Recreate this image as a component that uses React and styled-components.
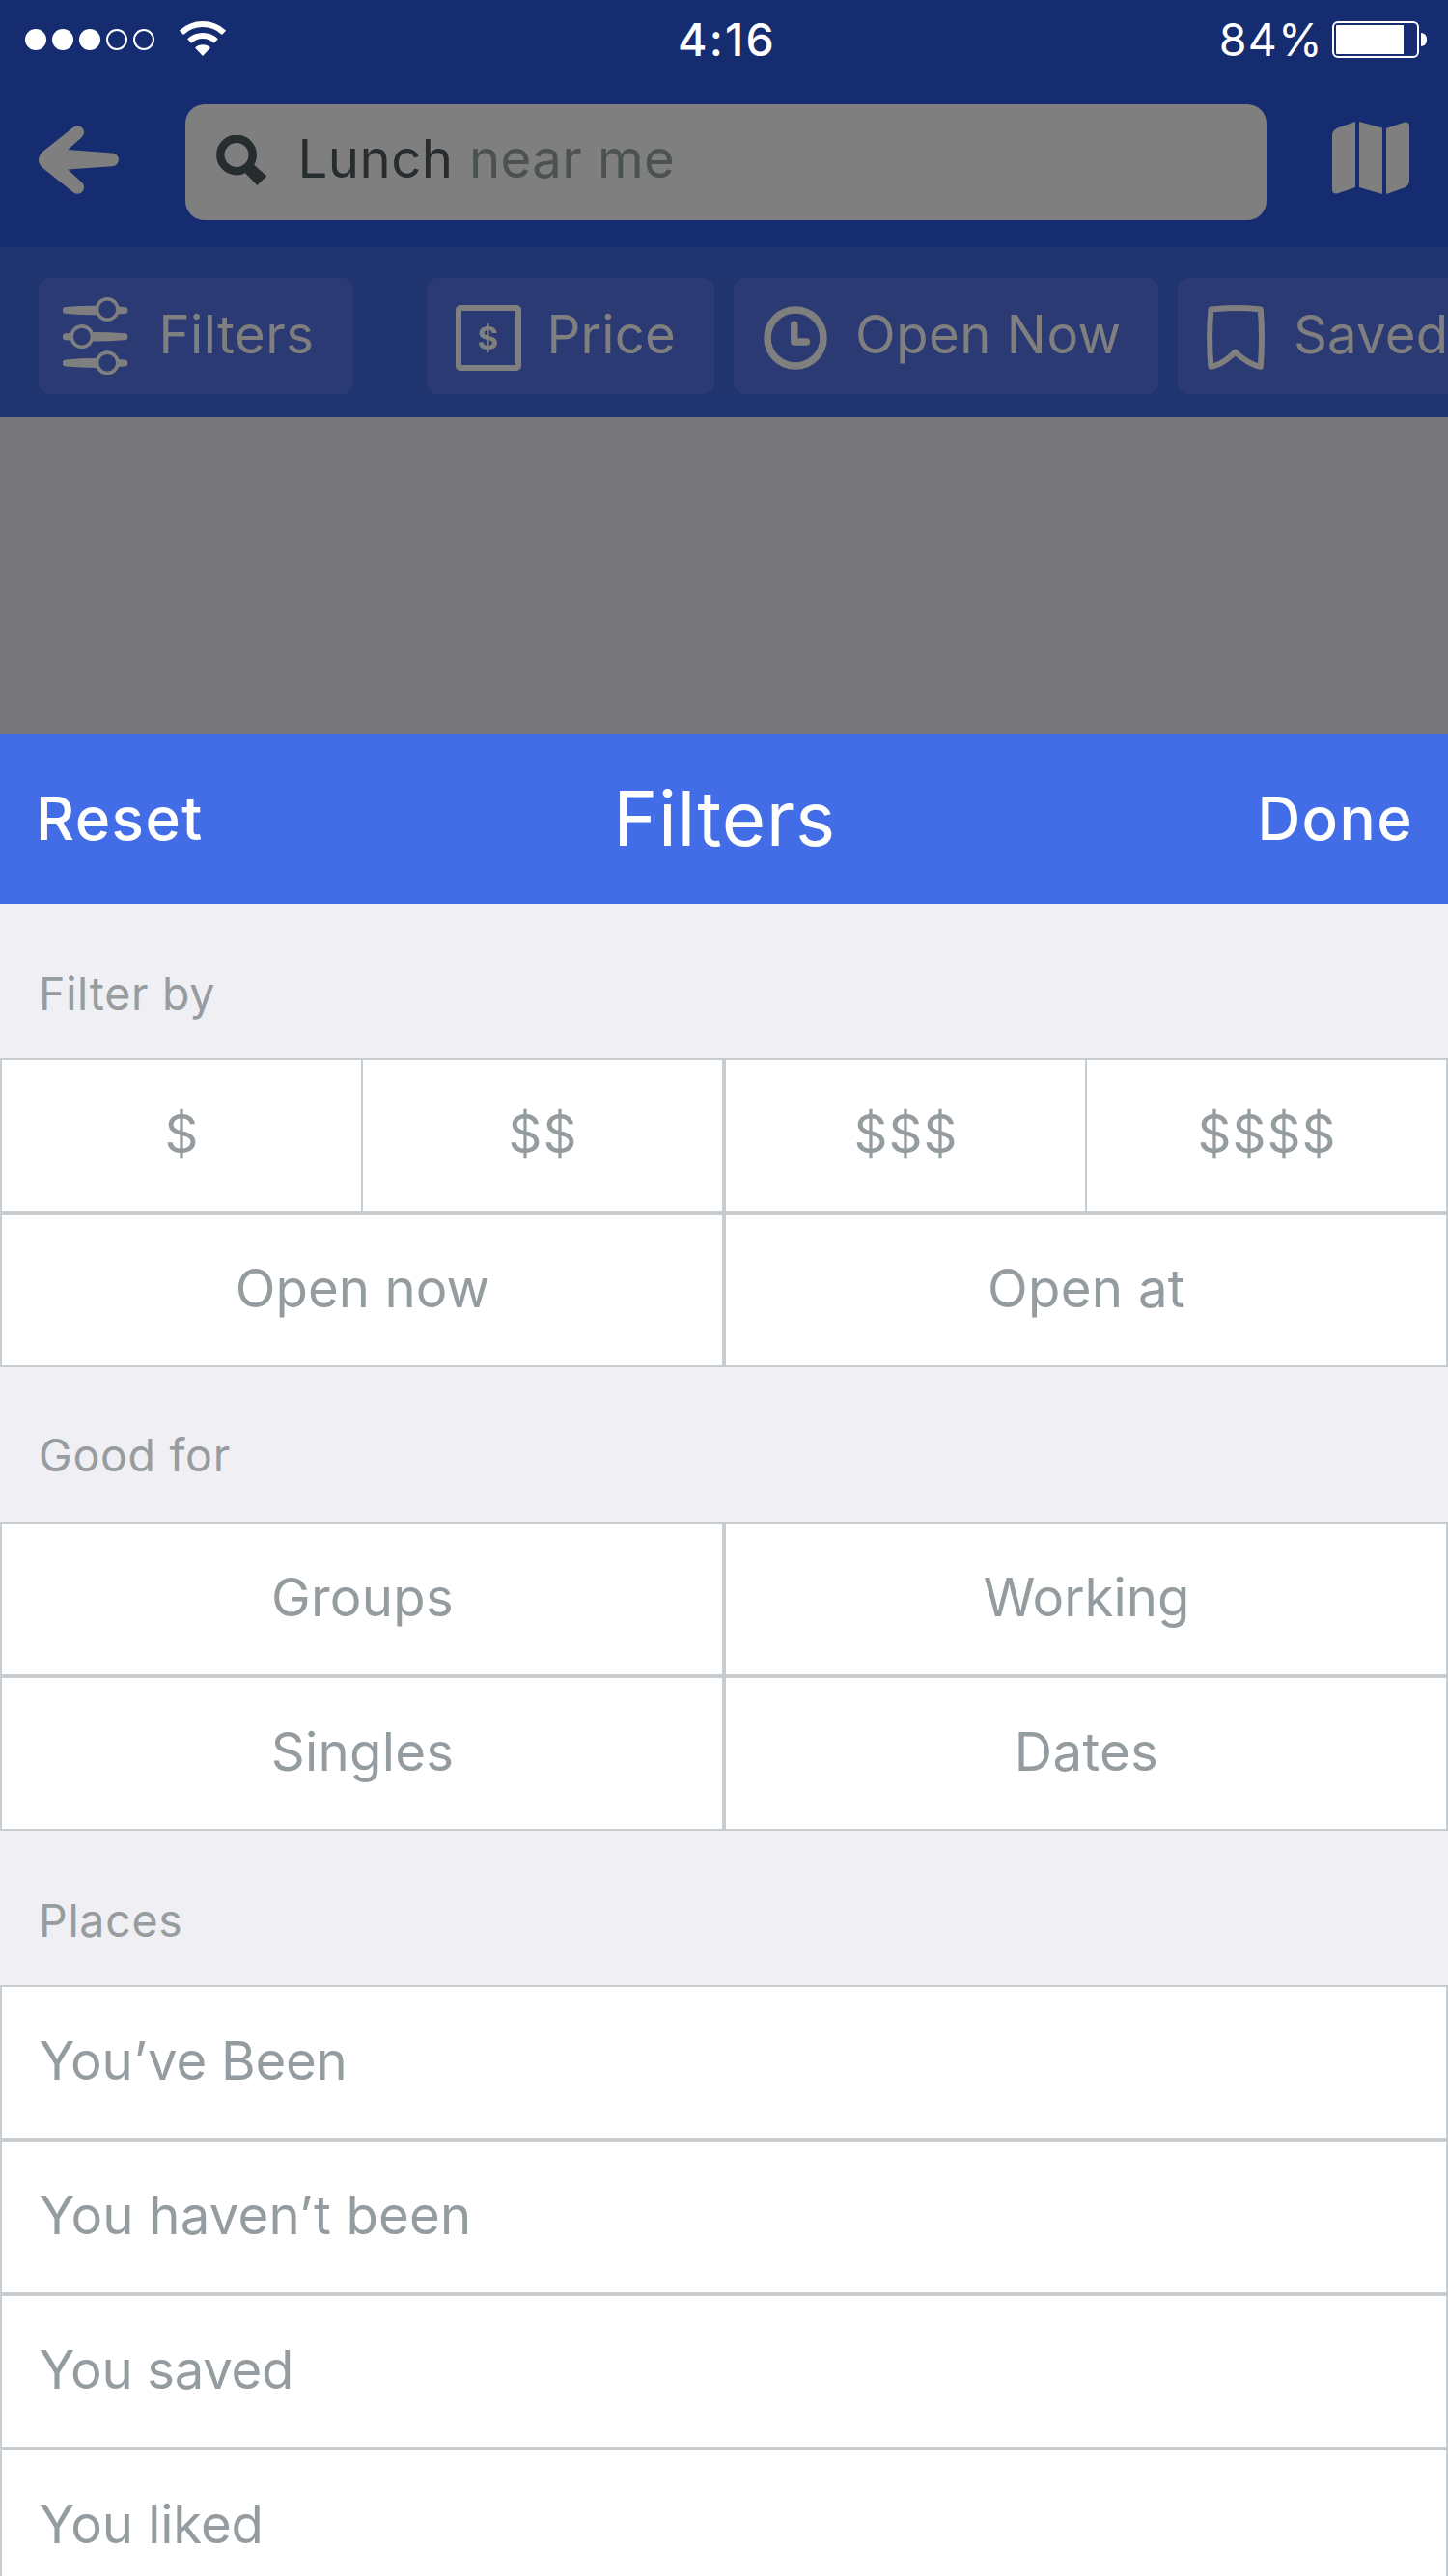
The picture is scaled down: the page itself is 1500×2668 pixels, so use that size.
import React from "react";
import styled, { createGlobalStyle } from "styled-components";

const ink = {
  navy: "#162c70",
  strip: "#203470",
  chip: "#2b3a73",
  dimmed: "#7f7f7f",
  accent: "#426de6",
  canvas: "#efeff4",
  line: "#c6cccf",
  text: "#959ca0",
};

const GlobalStyle = createGlobalStyle`
  *, *::before, *::after { box-sizing: border-box; }
  body {
    margin: 0;
    font-family: Inter, "Liberation Sans", sans-serif;
  }
`;

const Screen = styled.main`
  display: flex;
  flex-direction: column;
  width: 1500px;
  height: 2668px;
  overflow: hidden;
  background: #777779;
`;

const Txt = styled.span`
  white-space: pre;
  letter-spacing: ${(p) => p.$track || 0}px;
`;

/* Status bar */

const StatusBar = styled.div`
  display: flex;
  align-items: flex-start;
  flex: none;
  height: 96px;
  padding: 13px 22px 0 26px;
  background: ${ink.navy};
  color: #fff;
  font-size: 46.5px;
  line-height: 56px;
`;

const Carrier = styled.div`
  display: flex;
  align-items: center;
  gap: 26px;
  width: 676px;
  height: 56px;
`;

const SignalDots = styled.div`
  display: flex;
  gap: 6px;
`;

const Dot = styled.i`
  width: 22px;
  height: 22px;
  border: 2px solid #fff;
  border-radius: 50%;
  background: ${(p) => (p.$on ? "#fff" : "transparent")};
`;

const WifiIcon = styled.svg`
  margin-bottom: 2px;
`;

const Clock = styled(Txt)`
  font-weight: 500;
`;

const Power = styled.div`
  display: flex;
  align-items: center;
  gap: 9px;
  margin-left: auto;
`;

const Battery = styled.div`
  display: flex;
  align-items: center;
  gap: 2px;
`;

const BatteryShell = styled.div`
  width: 90px;
  height: 38px;
  padding: 2px;
  border: 2px solid #fff;
  border-radius: 6px;
`;

const BatteryLevel = styled.div`
  width: 70px;
  height: 30px;
  border-radius: 1px 0 0 1px;
  background: #fff;
`;

const BatteryTip = styled.div`
  width: 6px;
  height: 14px;
  border-radius: 0 7px 7px 0 / 0 7px 7px 0;
  background: #fff;
`;

/* Search header */

const NavBar = styled.header`
  display: flex;
  align-items: flex-start;
  flex: none;
  height: 160px;
  padding: 12px 40px 0;
  background: ${ink.navy};
`;

const IconButton = styled.button`
  display: flex;
  align-items: center;
  height: 120px;
  padding: 0;
  border: 0;
  background: none;
  color: ${ink.dimmed};
`;

const BackButton = styled(IconButton)`
  width: 152px;
  padding-bottom: 5px;
`;

const MapButton = styled(IconButton)`
  margin-left: auto;
  padding-bottom: 9px;
`;

const SearchField = styled.div`
  display: flex;
  align-items: flex-start;
  width: 1120px;
  height: 120px;
  padding: 23px 0 0 32px;
  border-radius: 20px;
  background: ${ink.dimmed};
  color: #272d2e;
  font-size: 54.5px;
  line-height: 66px;
`;

const SearchIcon = styled.svg`
  margin: 9px 31.5px 0 0;
`;

const Where = styled(Txt)`
  margin-left: 16.5px;
  color: #4c5151;
`;

/* Quick filters */

const ChipStrip = styled.nav`
  display: flex;
  gap: 20px;
  flex: none;
  height: 176px;
  padding: 32px 0 0 40px;
  overflow: hidden;
  background: ${ink.strip};
`;

const Chip = styled.button`
  display: flex;
  align-items: center;
  flex: none;
  width: ${(p) => p.$width}px;
  height: 120px;
  margin: 0 ${(p) => p.$after || 0}px 0 0;
  padding: 0 0 0 ${(p) => p.$inset}px;
  border: 0;
  border-radius: 12px;
  background: ${ink.chip};
  color: ${ink.dimmed};
  font: 400 54.5px/66px Inter, "Liberation Sans", sans-serif;
`;

const ChipLabel = styled(Txt)`
  margin: 0 0 4px ${(p) => p.$gap}px;
`;

/* Sheet */

const Sheet = styled.section`
  display: flex;
  flex-direction: column;
  flex: none;
  margin-top: 328px;
  background: ${ink.canvas};
`;

const SheetHeader = styled.div`
  display: grid;
  grid-template-columns: 1fr auto 1fr;
  align-items: start;
  height: 176px;
  padding: 40px 36px 0 37px;
  background: ${ink.accent};
  color: #fff;
`;

const SheetTitle = styled.h1`
  margin: 0;
  font-size: 78px;
  font-weight: 400;
  line-height: 95px;
  letter-spacing: 0.69px;
`;

const Action = styled.button`
  justify-self: ${(p) => p.$side};
  margin: 10px 0 0;
  padding: 0;
  border: 0;
  background: none;
  color: #fff;
  font: 500 62px/75px Inter, "Liberation Sans", sans-serif;
  letter-spacing: 1.42px;
`;

const SectionLabel = styled.h2`
  height: 160px;
  margin: 0;
  padding: ${(p) => p.$top || 65}px 40px 0;
  color: #979c9f;
  font-size: 46.5px;
  font-weight: 400;
  line-height: 56px;
  letter-spacing: 0.7px;
`;

const Options = styled.div`
  display: grid;
  grid-template-columns: ${(p) => p.$columns};
`;

const Option = styled.button`
  display: flex;
  align-items: center;
  justify-content: center;
  height: 160px;
  margin: 0;
  padding: 0 0 4px 1px;
  border: 2px solid ${ink.line};
  border-left-width: ${(p) => (p.$joined ? 0 : 2)}px;
  background: #fff;
  color: ${ink.text};
  font: 400 54.5px/66px Inter, "Liberation Sans", sans-serif;
`;

const ListOption = styled(Option)`
  justify-content: flex-start;
  padding-left: 38.5px;
`;

const FiltersIcon = () => (
  <svg width="68" height="80" viewBox="65 308 68 80" fill="currentColor">
    <path d="M68.3 318 Q84 316.6 101 316.7 V326.3 Q84 326.4 68.3 325 A3.5 3.5 0 0 1 68.3 318Z" />
    <path d="M121.5 317.4 L129 318 A3.5 3.5 0 0 1 129 325 L121.5 325.6Z" />
    <path d="M129 345.2 Q113 343.8 95 343.9 V353.5 Q113 353.6 129 352.2 A3.5 3.5 0 0 0 129 345.2Z" />
    <path d="M74.5 344.6 L68.3 345.2 A3.5 3.5 0 0 0 68.3 352.2 L74.5 352.8Z" />
    <path d="M68.3 372.5 Q84 371 101 371.1 V380.9 Q84 381 68.3 379.5 A3.5 3.5 0 0 1 68.3 372.5Z" />
    <path d="M121.5 371.9 L129 372.5 A3.5 3.5 0 0 1 129 379.5 L121.5 380.1Z" />
    <g fill={ink.chip} stroke="currentColor" strokeWidth="3.6">
      <circle cx="111.2" cy="320.5" r="10.7" />
      <circle cx="84.8" cy="348.6" r="10.7" />
      <circle cx="111.2" cy="375.8" r="10.7" />
    </g>
  </svg>
);

const PriceIcon = () => (
  <svg width="68" height="80" viewBox="472 308 68 80">
    <rect x="475" y="319" width="62" height="62" rx="2" fill="none" stroke="currentColor" strokeWidth="6" />
    <text x="505.2" y="362.2" textAnchor="middle" fill="currentColor" fontFamily="Inter, sans-serif" fontSize="33" fontWeight="700">
      $
    </text>
  </svg>
);

const ClockIcon = () => (
  <svg width="66" height="80" viewBox="791 308 66 80" fill="none" stroke="currentColor" strokeWidth="7.5">
    <circle cx="824" cy="350" r="29" />
    <path d="M822.8 336.2 V354 H835.4" strokeLinecap="round" strokeLinejoin="round" />
  </svg>
);

const BookmarkIcon = () => (
  <svg width="60" height="80" viewBox="1250 308 60 80" fill="none" stroke="currentColor" strokeWidth="6" strokeLinejoin="round">
    <path d="M1254.4 320.4 Q1280 317.6 1305.8 320.4 Q1308.2 350 1305.8 379.7 C1298 378.5 1287 372 1279.6 364.6 C1272 372 1263 378.5 1254.4 379.7 Q1251.8 350 1254.4 320.4Z" />
  </svg>
);

const chips = [
  { label: "Filters", Icon: FiltersIcon, width: 326, inset: 25, gap: 31.5, track: 0.45, after: 56 },
  { label: "Price", Icon: PriceIcon, width: 298, inset: 30, gap: 26.5, track: 0.25 },
  { label: "Open Now", Icon: ClockIcon, width: 440, inset: 31, gap: 29, track: 0.5 },
  { label: "Saved", Icon: BookmarkIcon, width: 326, inset: 30, gap: 30, track: 0.15 },
];

const prices = ["$", "$$", "$$$", "$$$$"];
const hours = [
  { label: "Open now", track: 0.1 },
  { label: "Open at", track: 0.3 },
];
const goodFor = [
  { label: "Groups", track: 0.3 },
  { label: "Working", track: 0 },
  { label: "Singles", track: 0.3 },
  { label: "Dates", track: 0.3 },
];
const places = [
  { label: "You’ve Been", track: -0.23 },
  { label: "You haven’t been", track: 0.19 },
  { label: "You saved", track: -0.3 },
  { label: "You liked", track: -0.1 },
];

export default function App() {
  return (
    <Screen>
      <GlobalStyle />
      <StatusBar>
        <Carrier>
          <SignalDots>
            {[1, 1, 1, 0, 0].map((on, i) => (
              <Dot key={i} $on={on} />
            ))}
          </SignalDots>
          <WifiIcon width="48" height="36" viewBox="186 22 48 36" fill="none" stroke="#fff" strokeWidth="6">
            <path d="M188 33.8 A32 32 0 0 1 232 33.8" />
            <path d="M196.2 42.5 A20 20 0 0 1 223.8 42.5" />
            <path d="M210 58 L202 49.4 A11.5 11.5 0 0 1 218 49.4Z" fill="#fff" stroke="none" />
          </WifiIcon>
        </Carrier>
        <Clock $track={2.2}>4:16</Clock>
        <Power>
          <Txt $track={1.25}>84%</Txt>
          <Battery>
            <BatteryShell>
              <BatteryLevel />
            </BatteryShell>
            <BatteryTip />
          </Battery>
        </Power>
      </StatusBar>

      <NavBar>
        <BackButton aria-label="Back">
          <svg width="83" height="72" viewBox="40 130 83 72" fill="currentColor">
            <path d="M70.3 155.1 L116 158.5 A6.9 6.9 0 0 1 116 172.3 L70.3 175.5 L84.6 188.8 A6.7 6.7 0 0 1 76 199.3 L44 173.7 Q40 170 40 165.4 Q40 161 44 157.3 L76 131.7 A6.7 6.7 0 0 1 84.6 142.2Z" />
          </svg>
        </BackButton>
        <SearchField>
          <SearchIcon width="53" height="53" viewBox="224 140 53 53">
            <circle cx="245" cy="160.5" r="16.7" fill="none" stroke="#272d2e" strokeWidth="8.4" />
            <path d="M263 170.5 L276.3 182.5 L266.4 192 L254 179.2Z" fill="#272d2e" />
          </SearchIcon>
          <Txt $track={0.48}>Lunch</Txt>
          <Where $track={0.4}>near me</Where>
        </SearchField>
        <MapButton aria-label="Map">
          <svg width="80" height="75" viewBox="1380 126 80 75" fill="currentColor">
            <path d="M1380 140 Q1380 135 1385.5 132.4 L1404 126 V194 L1385 200.4 Q1380 201 1380 196.5Z" />
            <path d="M1408 126 L1432 132.5 V201 L1408 194Z" />
            <path d="M1436 133 L1455 126.6 Q1460 126 1460 130.5 V187 Q1460 192 1454.5 194.6 L1436 201Z" />
          </svg>
        </MapButton>
      </NavBar>

      <ChipStrip>
        {chips.map(({ label, Icon, width, inset, gap, track, after }) => (
          <Chip key={label} $width={width} $inset={inset} $after={after}>
            <Icon />
            <ChipLabel $gap={gap} $track={track}>
              {label}
            </ChipLabel>
          </Chip>
        ))}
      </ChipStrip>

      <Sheet>
        <SheetHeader>
          <Action $side="start">Reset</Action>
          <SheetTitle>Filters</SheetTitle>
          <Action $side="end">Done</Action>
        </SheetHeader>

        <SectionLabel>Filter by</SectionLabel>
        <Options $columns="376px 374px 376px 374px">
          {prices.map((label, i) => (
            <Option key={label} $joined={i % 2 === 1}>
              <Txt $track={1}>{label}</Txt>
            </Option>
          ))}
        </Options>
        <Options $columns="1fr 1fr">
          {hours.map(({ label, track }) => (
            <Option key={label}>
              <Txt $track={track}>{label}</Txt>
            </Option>
          ))}
        </Options>

        <SectionLabel $top={63}>Good for</SectionLabel>
        <Options $columns="1fr 1fr">
          {goodFor.map(({ label, track }) => (
            <Option key={label}>
              <Txt $track={track}>{label}</Txt>
            </Option>
          ))}
        </Options>

        <SectionLabel>Places</SectionLabel>
        <Options $columns="1fr">
          {places.map(({ label, track }) => (
            <ListOption key={label}>
              <Txt $track={track}>{label}</Txt>
            </ListOption>
          ))}
        </Options>
      </Sheet>
    </Screen>
  );
}
